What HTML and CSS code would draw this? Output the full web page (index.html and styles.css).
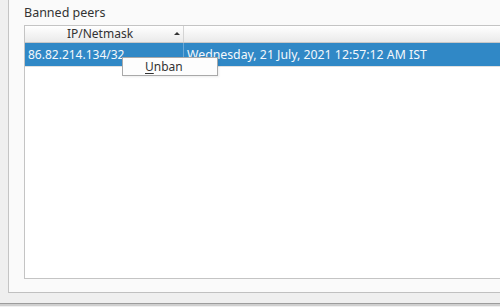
FILE: index.html
```html
<!DOCTYPE html>
<html>
<head>
<meta charset="utf-8">
<link rel="stylesheet" href="styles.css">
</head>
<body>
<div class="window">
  <div class="panel">
    <div class="label">Banned peers</div>
    <div class="table">
      <div class="header">
        <div class="hcell c1"><span>IP/Netmask</span><i class="arrow"></i></div>
        <div class="hcell c2"></div>
      </div>
      <div class="row selected">
        <div class="cell c1">86.82.214.134/32</div>
        <div class="cell c2">Wednesday, 21 July, 2021 12:57:12 AM IST</div>
      </div>
    </div>
  </div>
  <div class="bottom"></div>
</div>
<div class="menu"><span class="item"><u>U</u>nban</span></div>
</body>
</html>
```
FILE: styles.css
```css
html, body {
  margin: 0;
  padding: 0;
}
body {
  width: 500px;
  height: 307px;
  overflow: hidden;
  background: #efefef;
  font-family: "Noto Sans", "Open Sans", sans-serif;
  font-size: 12px;
  color: #3c3c3c;
  position: relative;
}
.window {
  display: flex;
  flex-direction: column;
  height: 307px;
}
.panel {
  margin-left: 8px;
  height: 293px;
  box-sizing: border-box;
  border-left: 1px solid #c4c4c4;
  border-bottom: 1px solid #c0c0c0;
  background: #fafafa;
  padding: 0 0 13px 15px;
  display: flex;
  flex-direction: column;
}
.label {
  height: 25px;
  line-height: 16px;
  padding-top: 5px;
  box-sizing: border-box;
  font-size: 12.5px;
  color: #333;
}
.table {
  flex: 1;
  border: 1px solid #c4c4c4;
  border-right: none;
  background: #fff;
  display: flex;
  flex-direction: column;
}
.header {
  display: flex;
  height: 16px;
  border-bottom: 1px solid #c8c8c8;
  background: linear-gradient(#ffffff, #eaeaea);
}
.hcell {
  position: relative;
  box-sizing: border-box;
  line-height: 16px;
  text-align: center;
  color: #333;
}
.c1 {
  width: 159px;
  border-right: 1px solid #d4d4d4;
  box-sizing: border-box;
}
.c2 {
  flex: 1;
  min-width: 0;
}
.hcell.c1 span {
  display: inline-block;
  margin-right: 8px;
}
.arrow {
  position: absolute;
  left: 149px;
  top: 6px;
  width: 0;
  height: 0;
  border-left: 3px solid transparent;
  border-right: 3px solid transparent;
  border-bottom: 3px solid #333;
}
.row {
  display: flex;
  height: 23px;
  border-bottom: 1px solid #e0e0e0;
}
.row.selected {
  background: #3088c6;
  color: #f4f8fc;
}
.cell {
  line-height: 23px;
  padding-left: 3px;
  box-sizing: border-box;
  white-space: nowrap;
  overflow: hidden;
}
.cell.c2 {
  font-size: 12.3px;
}
.row .c1 {
  border-right: 1px solid #6aa8d6;
}
.bottom {
  margin-top: 10px;
  height: 1px;
  background: #9c9c9c;
  border-bottom: 2px solid #cfcfcf;
}
.menu {
  position: absolute;
  left: 122px;
  top: 57px;
  width: 96px;
  height: 19px;
  box-sizing: border-box;
  border: 1px solid #a9a9a9;
  background: #fdfdfd;
  box-shadow: 1px 1px 2px rgba(0,0,0,0.08);
}
.item {
  display: block;
  padding-left: 22px;
  line-height: 17px;
  color: #333;
}
.item u {
  text-decoration-thickness: 1px;
  text-underline-offset: 2px;
}
```
